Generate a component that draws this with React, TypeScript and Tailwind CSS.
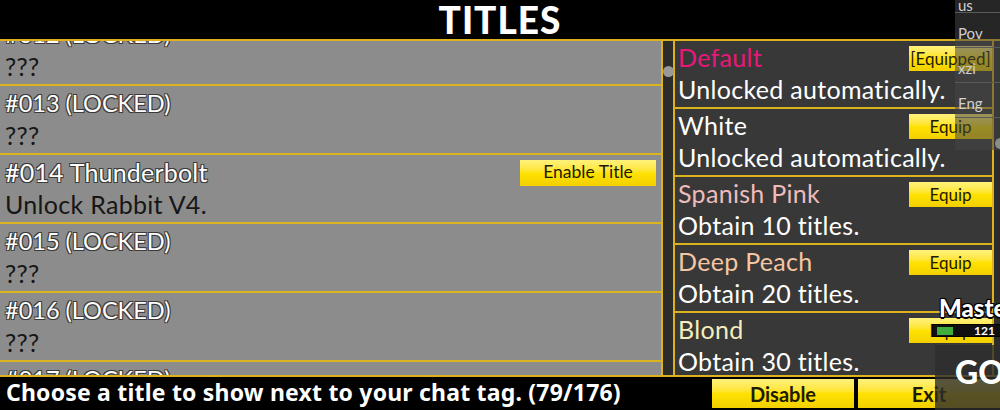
import React from "react";

const leftRows = [
  { title: "#012 (LOCKED)", desc: "???", btn: false },
  { title: "#013 (LOCKED)", desc: "???", btn: false },
  { title: "#014 Thunderbolt", desc: "Unlock Rabbit V4.", btn: true },
  { title: "#015 (LOCKED)", desc: "???", btn: false },
  { title: "#016 (LOCKED)", desc: "???", btn: false },
  { title: "#017 (LOCKED)", desc: "???", btn: false },
];

const rightRows = [
  { title: "Default", color: "text-[#e8177a]", desc: "Unlocked automatically.", btn: "[Equipped]" },
  { title: "White", color: "text-white", desc: "Unlocked automatically.", btn: "Equip" },
  { title: "Spanish Pink", color: "text-[#efbcbc]", desc: "Obtain 10 titles.", btn: "Equip" },
  { title: "Deep Peach", color: "text-[#f5c6a2]", desc: "Obtain 20 titles.", btn: "Equip" },
  { title: "Blond", color: "text-[#f6edbd]", desc: "Obtain 30 titles.", btn: "Equip" },
];

const btn =
  "bg-gradient-to-b from-[#fff27a] via-[#ffe200] to-[#f2d000] text-[#1e1a00] flex items-center justify-center";

const outline =
  "[text-shadow:-1px_-1px_0_#3a3a3a,1px_-1px_0_#3a3a3a,-1px_1px_0_#3a3a3a,1px_1px_0_#3a3a3a]";

export default function App() {
  return (
    <div className="relative w-[1000px] h-[410px] overflow-hidden bg-black font-['Lato',sans-serif]">
      <div className="h-[39px] flex items-center justify-center">
        <span className="text-white font-black text-[37px] leading-none tracking-[1px]">TITLES</span>
      </div>
      <div className="flex h-[338px] border-t-2 border-[#dcb31e]">
        <div className="w-[663px] overflow-hidden bg-[#8c8c8c]">
          <div className="-mt-[24px] flex flex-col">
            {leftRows.map((r) => (
              <div
                key={r.title}
                className="h-[69px] shrink-0 border-b-2 border-r-2 border-[#dcb31e] pl-[5px] pt-[1px] flex flex-col"
              >
                <div className="flex items-center justify-between h-[32px]">
                  <span
                    className={`text-white leading-[32px] ${outline} ${
                      r.btn ? "text-[25px] tracking-[0.2px]" : "text-[23.5px]"
                    }`}
                  >
                    {r.title}
                  </span>
                  {r.btn && (
                    <div className={`${btn} w-[136px] h-[26px] mr-[5px] mt-[1px] text-[17.5px]`}>Enable Title</div>
                  )}
                </div>
                <div className="text-[#161616] text-[25px] tracking-[0.3px] leading-[32px]">{r.desc}</div>
              </div>
            ))}
          </div>
        </div>
        <div className="w-[10px] bg-[#2c2c2c] relative">
          <div className="absolute left-[0px] top-[25px] w-[11px] h-[11px] rounded-full bg-[#9a9a9a]" />
        </div>
        <div className="flex-1 bg-[#2c2c2c] overflow-hidden">
          <div className="w-[321px] flex flex-col">
            {rightRows.map((r) => (
              <div
                key={r.title}
                className="h-[68px] shrink-0 border-b-2 border-x-2 border-[#dcb31e] bg-[#383838] pl-[3px] flex flex-col"
              >
                <div className="flex items-start justify-between h-[32px]">
                  <span className={`${r.color} text-[25px] tracking-[0.3px] leading-[32px]`}>{r.title}</span>
                  <div className={`${btn} w-[83px] h-[25px] mt-[5px] text-[17px]`}>{r.btn}</div>
                </div>
                <div className="text-white text-[25px] tracking-[0.3px] leading-[32px]">{r.desc}</div>
              </div>
            ))}
          </div>
        </div>
      </div>
      <div className="h-[33px] border-t-2 border-[#dcb31e] flex items-center -mt-[2px] relative">
        <span className="pl-[6px] text-white font-bold text-[23px] tracking-[0.2px] leading-none font-['Noto_Sans',sans-serif]">
          Choose a title to show next to your chat tag. (79/176)
        </span>
        <div className={`${btn} absolute left-[712px] top-[2px] w-[142px] h-[29px] font-bold text-[20px]`}>Disable</div>
        <div className={`${btn} absolute left-[858px] top-[2px] w-[142px] h-[29px] font-bold text-[20px]`}>Exit</div>
      </div>

      {/* player list overlay */}
      <div className="absolute right-0 top-0 w-[45px] h-[150px] bg-[rgba(70,70,70,0.55)] flex flex-col text-[#d0d0d0] text-[15px] leading-none">
        <div className="h-[17px] border-b border-[#5a5a5a] pl-[3px] flex items-start -mt-[4px] pt-[2px]">us</div>
        <div className="h-[35px] border-b border-[#5a5a5a] pl-[3px] flex items-center pt-[6px]">Pov</div>
        <div className="h-[35px] border-b border-[#5a5a5a] pl-[3px] flex items-center pt-[6px]">xzi</div>
        <div className="h-[35px] border-b border-[#5a5a5a] pl-[3px] flex items-center pt-[6px]">Eng</div>
        <div className="absolute right-[-6px] top-[138px] w-[11px] h-[11px] rounded-full bg-[#8a8a8a]" />
      </div>

      {/* bottom right HUD */}
      <div className="absolute left-[939px] top-[296px] text-white font-black text-[24px] leading-none [text-shadow:-1px_-1px_0_#000,1px_-1px_0_#000,-1px_1px_0_#000,1px_1px_0_#000,0_2px_0_#000]">
        Master
      </div>
      <div className="absolute left-[932px] top-[324px] w-[70px] h-[13px] bg-[#101010] border border-black flex items-center">
        <div className="ml-[4px] w-[16px] h-[8px] bg-[#3fae3f]" />
        <span className="ml-[21px] text-white font-bold text-[12px] leading-none">121</span>
      </div>
      <div className="absolute left-[935px] top-[345px] w-[65px] h-[65px] bg-[rgba(45,45,45,0.8)] flex items-start">
        <span className="ml-[20px] mt-[11px] text-white font-black text-[32px] leading-none">GO</span>
      </div>
    </div>
  );
}
